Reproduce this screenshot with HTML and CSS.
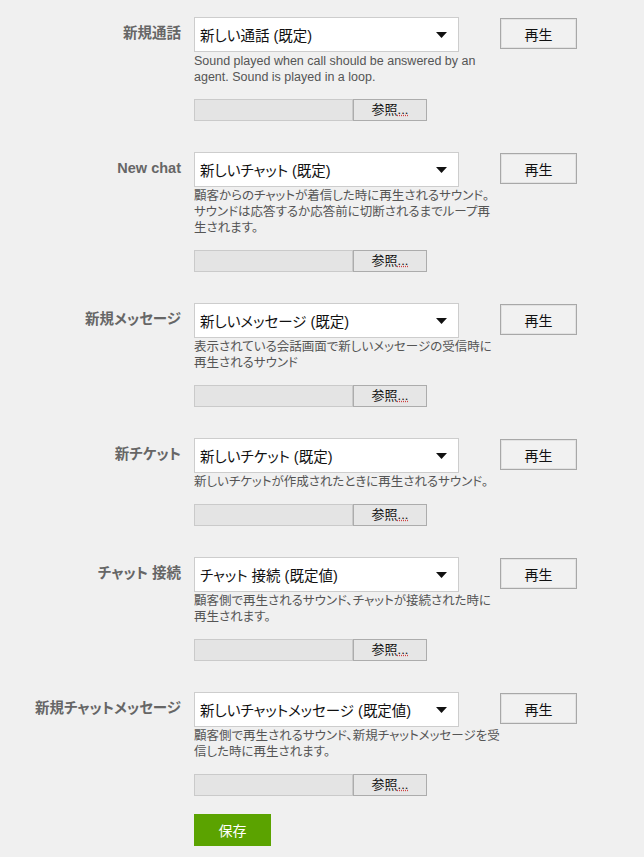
FILE: index.html
```html
<!DOCTYPE html>
<html lang="ja">
<head>
<meta charset="utf-8">
<title>サウンド設定</title>
<link rel="stylesheet" href="styles.css">
</head>
<body>
<form class="sounds">
  <div class="row">
    <label class="label">新規通話</label>
    <div class="field">
      <div class="select"><span class="select-text">新しい通話 (既定)</span><svg class="arrow" width="11" height="6" viewBox="0 0 11 6"><path d="M0 0H11L5.5 6Z" fill="#111"/></svg></div>
      <p class="desc">Sound played when call should be answered by an<br>agent. Sound is played in a loop.</p>
      <div class="file"><span class="file-name"></span><span class="file-btn">参照<span class="dots">...</span></span></div>
    </div>
    <button type="button" class="play">再生</button>
  </div>

  <div class="row">
    <label class="label">New chat</label>
    <div class="field">
      <div class="select"><span class="select-text">新しいチャット (既定)</span><svg class="arrow" width="11" height="6" viewBox="0 0 11 6"><path d="M0 0H11L5.5 6Z" fill="#111"/></svg></div>
      <p class="desc">顧客からのチャットが着信した時に再生されるサウンド。<br>サウンドは応答するか応答前に切断されるまでループ再<br>生されます。</p>
      <div class="file"><span class="file-name"></span><span class="file-btn">参照<span class="dots">...</span></span></div>
    </div>
    <button type="button" class="play">再生</button>
  </div>

  <div class="row">
    <label class="label">新規メッセージ</label>
    <div class="field">
      <div class="select"><span class="select-text">新しいメッセージ (既定)</span><svg class="arrow" width="11" height="6" viewBox="0 0 11 6"><path d="M0 0H11L5.5 6Z" fill="#111"/></svg></div>
      <p class="desc">表示されている会話画面で新しいメッセージの受信時に<br>再生されるサウンド</p>
      <div class="file"><span class="file-name"></span><span class="file-btn">参照<span class="dots">...</span></span></div>
    </div>
    <button type="button" class="play">再生</button>
  </div>

  <div class="row">
    <label class="label">新チケット</label>
    <div class="field">
      <div class="select"><span class="select-text">新しいチケット (既定)</span><svg class="arrow" width="11" height="6" viewBox="0 0 11 6"><path d="M0 0H11L5.5 6Z" fill="#111"/></svg></div>
      <p class="desc">新しいチケットが作成されたときに再生されるサウンド。</p>
      <div class="file"><span class="file-name"></span><span class="file-btn">参照<span class="dots">...</span></span></div>
    </div>
    <button type="button" class="play">再生</button>
  </div>

  <div class="row">
    <label class="label">チャット 接続</label>
    <div class="field">
      <div class="select"><span class="select-text">チャット 接続 (既定値)</span><svg class="arrow" width="11" height="6" viewBox="0 0 11 6"><path d="M0 0H11L5.5 6Z" fill="#111"/></svg></div>
      <p class="desc">顧客側で再生されるサウンド、チャットが接続された時に<br>再生されます。</p>
      <div class="file"><span class="file-name"></span><span class="file-btn">参照<span class="dots">...</span></span></div>
    </div>
    <button type="button" class="play">再生</button>
  </div>

  <div class="row">
    <label class="label">新規チャットメッセージ</label>
    <div class="field">
      <div class="select"><span class="select-text">新しいチャットメッセージ (既定値)</span><svg class="arrow" width="11" height="6" viewBox="0 0 11 6"><path d="M0 0H11L5.5 6Z" fill="#111"/></svg></div>
      <p class="desc">顧客側で再生されるサウンド、新規チャットメッセージを受<br>信した時に再生されます。</p>
      <div class="file"><span class="file-name"></span><span class="file-btn">参照<span class="dots">...</span></span></div>
    </div>
    <button type="button" class="play">再生</button>
  </div>

  <div class="actions">
    <button type="button" class="save">保存</button>
  </div>
</form>
</body>
</html>
```

FILE: styles.css
```css
html, body {
  margin: 0;
  padding: 0;
  background: #f0f0f0;
}

body {
  font-family: "Liberation Sans", "Noto Sans CJK JP", sans-serif;
  font-feature-settings: "palt";
  color: #222;
}

.sounds {
  display: flex;
  flex-direction: column;
  padding-top: 17px;
}

.row {
  display: flex;
  align-items: flex-start;
  margin-bottom: 31px;
}

.label {
  width: 181px;
  flex: none;
  text-align: right;
  font-size: 14.5px;
  font-weight: bold;
  color: #666;
  line-height: 18px;
  padding-top: 7px;
  white-space: nowrap;
}

.field {
  width: 265px;
  flex: none;
  margin-left: 13px;
}

.select {
  position: relative;
  box-sizing: border-box;
  height: 35px;
  background: #fff;
  border: 1px solid #cdcdcd;
  display: flex;
  align-items: center;
  padding-left: 5px;
}

.select-text {
  font-size: 14.5px;
  color: #111;
  white-space: nowrap;
}

.arrow {
  position: absolute;
  right: 11px;
  top: 14px;
}

.desc {
  margin: 0;
  padding-top: 1px;
  font-size: 12.5px;
  line-height: 16px;
  color: #555;
  white-space: nowrap;
}

.file {
  display: flex;
  height: 22px;
  margin-top: 14px;
  width: 233px;
}

.file-name {
  box-sizing: border-box;
  width: 159px;
  height: 22px;
  background: #e4e4e4;
  border: 1px solid #cacaca;
}

.file-btn {
  box-sizing: border-box;
  width: 74px;
  height: 22px;
  background: #e6e6e6;
  border: 1px solid #acacac;
  font-size: 13px;
  color: #111;
  display: flex;
  align-items: center;
  justify-content: center;
  line-height: 20px;
}

.dots {
  text-decoration: underline dotted #d04040;
}

.play {
  flex: none;
  box-sizing: border-box;
  width: 77px;
  height: 31px;
  margin-left: 41px;
  margin-top: 1px;
  background: #f1f1f1;
  border: 1px solid #a8a8a8;
  box-shadow: inset 0 0 0 1px #e2e2e2;
  font-family: "Liberation Sans", "Noto Sans CJK JP", sans-serif;
  font-size: 14px;
  color: #111;
  padding: 0;
  border-radius: 0;
}

.actions {
  margin-top: -13px;
  padding-left: 194px;
}

.save {
  width: 77px;
  height: 32px;
  background: #5ba300;
  border: none;
  color: #fff;
  font-family: "Liberation Sans", "Noto Sans CJK JP", sans-serif;
  font-size: 14px;
  padding: 0;
  border-radius: 0;
}
```
